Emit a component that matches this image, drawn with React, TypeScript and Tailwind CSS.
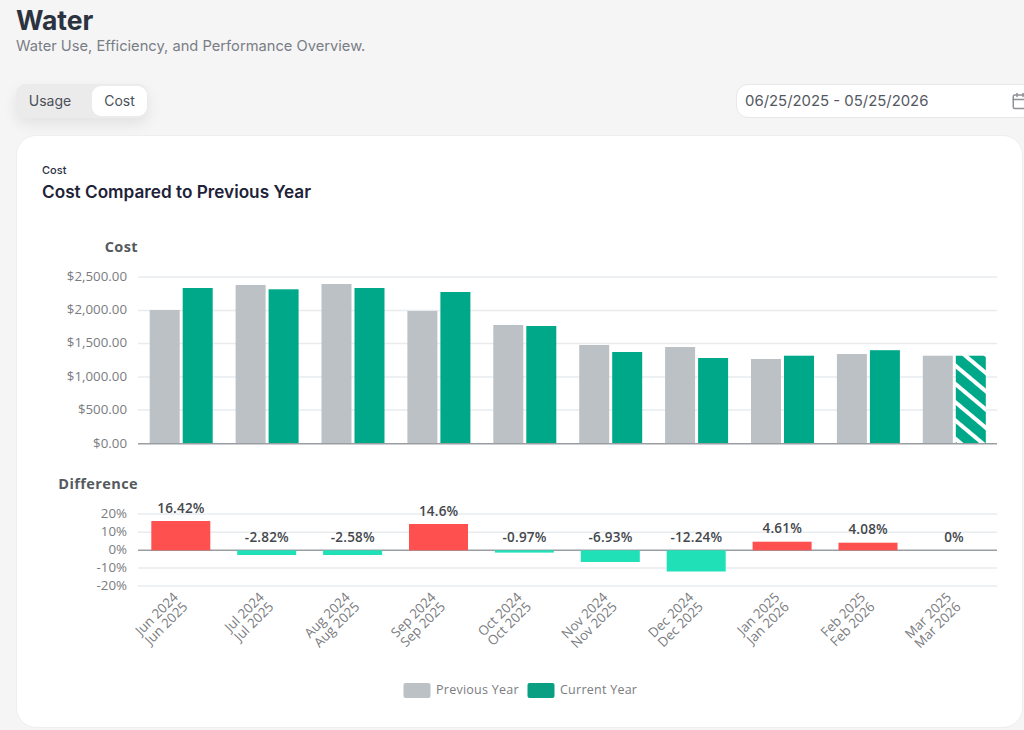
import { Calendar } from "lucide-react";

const step = 85.9;
const prevTops = [310, 285, 284, 311, 325, 345, 347, 359, 354, 355.7];
const currTops = [288, 289.3, 288, 292, 326, 352, 358, 355.7, 350.2, 355.7];
const base = 443.7;
const zero = 550.3;
const diffs: { label: string; y: number; edge: number | null; up: boolean }[] = [
  { label: "16.42%", y: 508, edge: 521, up: true },
  { label: "-2.82%", y: 537, edge: 555, up: false },
  { label: "-2.58%", y: 537, edge: 555, up: false },
  { label: "14.6%", y: 511, edge: 524, up: true },
  { label: "-0.97%", y: 537, edge: 552.6, up: false },
  { label: "-6.93%", y: 537, edge: 562, up: false },
  { label: "-12.24%", y: 537, edge: 571.5, up: false },
  { label: "4.61%", y: 528.5, edge: 541.7, up: true },
  { label: "4.08%", y: 529.5, edge: 542.7, up: true },
  { label: "0%", y: 537, edge: null, up: true },
];
const months = [
  ["Jun 2024", "Jun 2025"],
  ["Jul 2024", "Jul 2025"],
  ["Aug 2024", "Aug 2025"],
  ["Sep 2024", "Sep 2025"],
  ["Oct 2024", "Oct 2025"],
  ["Nov 2024", "Nov 2025"],
  ["Dec 2024", "Dec 2025"],
  ["Jan 2025", "Jan 2026"],
  ["Feb 2025", "Feb 2026"],
  ["Mar 2025", "Mar 2026"],
];
const costTicks: [string, number][] = [
  ["$2,500.00", 277],
  ["$2,000.00", 310.5],
  ["$1,500.00", 343.5],
  ["$1,000.00", 377],
  ["$500.00", 410],
  ["$0.00", 443.7],
];
const diffTicks: [string, number][] = [
  ["20%", 514],
  ["10%", 532.3],
  ["0%", 550.3],
  ["-10%", 568],
  ["-20%", 586],
];

function Chart() {
  const font = { fontFamily: "'Open Sans', sans-serif" };
  return (
    <svg viewBox="16 212 1007 516" className="block w-[1007px] h-[516px]" style={font}>
      <defs>
        <pattern id="hatch" width="14" height="14" patternUnits="userSpaceOnUse" patternTransform="rotate(40)">
          <rect width="14" height="14" fill="#00a88a" />
          <rect width="14" height="4" fill="#ffffff" />
        </pattern>
      </defs>

      <text x="138" y="252" textAnchor="end" fontSize="14.5" fontWeight="700" fill="#555a60" letterSpacing="0.4">Cost</text>
      {costTicks.map(([t, y]) => (
        <g key={t}>
          {y < 443 && <line x1="138" x2="997" y1={y} y2={y} stroke="#e9ecef" strokeWidth="1.5" />}
          <text x="127" y={y + 3.8} textAnchor="end" fontSize="13.3" fill="#7a7c80">{t}</text>
        </g>
      ))}
      {prevTops.map((top, i) => (
        <rect key={i} x={149.7 + step * i} y={top} width="30" height={base - top} fill="#bcc1c5" />
      ))}
      {currTops.map((top, i) => (
        <rect key={i} x={182.7 + step * i} y={top} width="30" height={base - top} fill={i === 9 ? "url(#hatch)" : "#00a88a"} />
      ))}
      <line x1="138" x2="997" y1={base} y2={base} stroke="#9a9da1" strokeWidth="1.5" />

      <text x="138" y="489" textAnchor="end" fontSize="14.5" fontWeight="700" fill="#555a60" letterSpacing="0.4">Difference</text>
      {diffTicks.map(([t, y]) => (
        <g key={t}>
          {t !== "0%" && <line x1="138" x2="997" y1={y} y2={y} stroke="#e9ecef" strokeWidth="1.5" />}
          <text x="127" y={y + 3.8} textAnchor="end" fontSize="13.3" fill="#7a7c80">{t}</text>
        </g>
      ))}
      <line x1="138" x2="997" y1={zero} y2={zero} stroke="#9a9da1" strokeWidth="1.5" />
      {diffs.map((d, i) =>
        d.edge === null ? null : (
          <rect
            key={i}
            x={151.3 + step * i}
            y={d.up ? d.edge : zero}
            width="59"
            height={Math.abs(d.edge - zero)}
            fill={d.up ? "#ff5050" : "#20e0b8"}
          />
        )
      )}
      {diffs.map((d, i) => (
        <text key={i} x={181 + step * i} y={d.y + 4.5} textAnchor="middle" fontSize="13.5" fontWeight="600" fill="#44484d" letterSpacing="0.2">{d.label}</text>
      ))}
      {months.map(([a, b], i) => (
        <g key={a}>
          <text transform={`translate(${179 + step * i} 598) rotate(-45)`} textAnchor="end" fontSize="13.3" fill="#7a7c80">{a}</text>
          <text transform={`translate(${188.5 + step * i} 607.5) rotate(-45)`} textAnchor="end" fontSize="13.3" fill="#7a7c80">{b}</text>
        </g>
      ))}

      <rect x="403.5" y="683" width="27" height="15" rx="2" fill="#bcc1c5" />
      <text x="436" y="694" fontSize="12.5" fill="#7a7c80" letterSpacing="0.25">Previous Year</text>
      <rect x="527.5" y="683" width="27" height="15" rx="2" fill="#0a9e82" />
      <text x="560" y="694" fontSize="12.5" fill="#7a7c80" letterSpacing="0.25">Current Year</text>
    </svg>
  );
}

export default function App() {
  return (
    <div className="w-[1024px] h-[730px] overflow-hidden bg-[#f5f5f5] pl-4 pr-px font-['Inter',sans-serif]">
      <div className="pt-[4px]">
        <h1 className="text-[26.5px] leading-[32px] font-bold text-[#2b3240]">Water</h1>
        <p className="text-[14.7px] leading-[20px] text-[#7a7e86]">Water Use, Efficiency, and Performance Overview.</p>
      </div>
      <div className="mt-[28px] flex items-center justify-between">
        <div className="flex h-[34px] w-[132px] items-center gap-[10px] rounded-[10px] bg-[#ebebeb] pl-[2px] shadow-[0_6px_14px_rgba(0,0,0,0.08)]">
          <div className="w-[64px] text-center text-sm text-[#4a4f58]">Usage</div>
          <div className="flex h-[30px] w-[55px] items-center justify-center rounded-[9px] bg-white text-sm text-[#4a4f58]">Cost</div>
        </div>
        <div className="-mr-[11px] flex h-[34px] w-[298px] shrink-0 items-center justify-between rounded-[12px] border border-[#e8e8e8] bg-white pl-[8px] pr-[4px]">
          <span className="text-[14.9px] text-[#55595f]">06/25/2025 - 05/25/2026</span>
          <Calendar className="h-[18px] w-[18px] text-[#8e9196]" />
        </div>
      </div>
      <div className="mt-[17px] h-[593px] rounded-[20px] border border-[#eeeeee] bg-white">
        <div className="px-[25px] pt-[26px]">
          <div className="text-[11px] leading-[16px] font-medium text-[#2b3045]">Cost</div>
          <div className="mt-[2px] text-[17.2px] leading-[24px] font-semibold text-[#1e2238]">Cost Compared to Previous Year</div>
        </div>
        <div className="-mx-px mt-[8px]">
          <Chart />
        </div>
      </div>
    </div>
  );
}
